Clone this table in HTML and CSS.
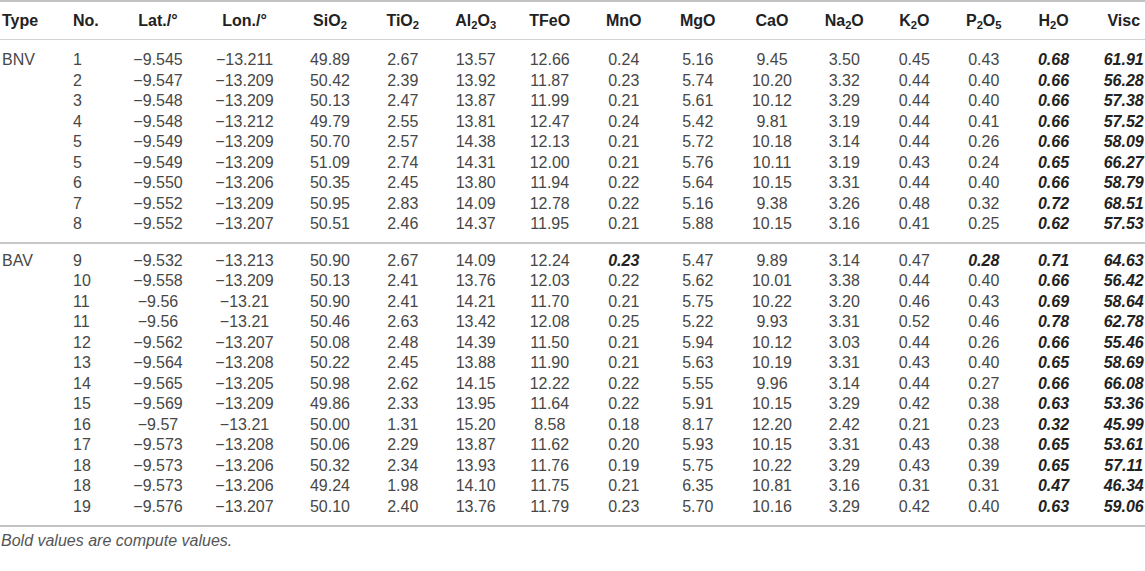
FILE: index.html
```html
<html>

<head>
    <link rel="stylesheet" href="styles.css">
</head>

<body>
<div class="wrap">
    <table class="data">
        <colgroup>
            <col style="width: 71px"><col style="width: 43.5px"><col style="width: 87px"><col style="width: 86px">
            <col style="width: 79px"><col style="width: 72.5px"><col style="width: 73.5px"><col style="width: 74.5px">
            <col style="width: 73.5px"><col style="width: 74.5px"><col style="width: 74px"><col style="width: 70.5px">
            <col style="width: 69.5px"><col style="width: 69.5px"><col style="width: 70px"><col style="width: 56.5px">
        </colgroup>
        <thead>
        <tr>
            <th>Type</th><th>No.</th><th>Lat./°</th><th>Lon./°</th><th>SiO<sub>2</sub></th><th>TiO<sub>2</sub></th>
            <th>Al<sub>2</sub>O<sub>3</sub></th><th>TFeO</th><th>MnO</th><th>MgO</th><th>CaO</th><th>Na<sub>2</sub>O</th>
            <th>K<sub>2</sub>O</th><th>P<sub>2</sub>O<sub>5</sub></th><th>H<sub>2</sub>O</th><th>Visc</th>
        </tr>
        </thead>
        <tbody>
        <tr><td>BNV</td><td>1</td><td>−9.545</td><td>−13.211</td><td>49.89</td><td>2.67</td><td>13.57</td><td>12.66</td><td>0.24</td><td>5.16</td><td>9.45</td><td>3.50</td><td>0.45</td><td>0.43</td><td>0.68</td><td>61.91</td></tr>
        <tr><td></td><td>2</td><td>−9.547</td><td>−13.209</td><td>50.42</td><td>2.39</td><td>13.92</td><td>11.87</td><td>0.23</td><td>5.74</td><td>10.20</td><td>3.32</td><td>0.44</td><td>0.40</td><td>0.66</td><td>56.28</td></tr>
        <tr><td></td><td>3</td><td>−9.548</td><td>−13.209</td><td>50.13</td><td>2.47</td><td>13.87</td><td>11.99</td><td>0.21</td><td>5.61</td><td>10.12</td><td>3.29</td><td>0.44</td><td>0.40</td><td>0.66</td><td>57.38</td></tr>
        <tr><td></td><td>4</td><td>−9.548</td><td>−13.212</td><td>49.79</td><td>2.55</td><td>13.81</td><td>12.47</td><td>0.24</td><td>5.42</td><td>9.81</td><td>3.19</td><td>0.44</td><td>0.41</td><td>0.66</td><td>57.52</td></tr>
        <tr><td></td><td>5</td><td>−9.549</td><td>−13.209</td><td>50.70</td><td>2.57</td><td>14.38</td><td>12.13</td><td>0.21</td><td>5.72</td><td>10.18</td><td>3.14</td><td>0.44</td><td>0.26</td><td>0.66</td><td>58.09</td></tr>
        <tr><td></td><td>5</td><td>−9.549</td><td>−13.209</td><td>51.09</td><td>2.74</td><td>14.31</td><td>12.00</td><td>0.21</td><td>5.76</td><td>10.11</td><td>3.19</td><td>0.43</td><td>0.24</td><td>0.65</td><td>66.27</td></tr>
        <tr><td></td><td>6</td><td>−9.550</td><td>−13.206</td><td>50.35</td><td>2.45</td><td>13.80</td><td>11.94</td><td>0.22</td><td>5.64</td><td>10.15</td><td>3.31</td><td>0.44</td><td>0.40</td><td>0.66</td><td>58.79</td></tr>
        <tr><td></td><td>7</td><td>−9.552</td><td>−13.209</td><td>50.95</td><td>2.83</td><td>14.09</td><td>12.78</td><td>0.22</td><td>5.16</td><td>9.38</td><td>3.26</td><td>0.48</td><td>0.32</td><td>0.72</td><td>68.51</td></tr>
        <tr><td></td><td>8</td><td>−9.552</td><td>−13.207</td><td>50.51</td><td>2.46</td><td>14.37</td><td>11.95</td><td>0.21</td><td>5.88</td><td>10.15</td><td>3.16</td><td>0.41</td><td>0.25</td><td>0.62</td><td>57.53</td></tr>
        </tbody>
        <tbody>
        <tr><td>BAV</td><td>9</td><td>−9.532</td><td>−13.213</td><td>50.90</td><td>2.67</td><td>14.09</td><td>12.24</td><td class="calc">0.23</td><td>5.47</td><td>9.89</td><td>3.14</td><td>0.47</td><td class="calc">0.28</td><td>0.71</td><td>64.63</td></tr>
        <tr><td></td><td>10</td><td>−9.558</td><td>−13.209</td><td>50.13</td><td>2.41</td><td>13.76</td><td>12.03</td><td>0.22</td><td>5.62</td><td>10.01</td><td>3.38</td><td>0.44</td><td>0.40</td><td>0.66</td><td>56.42</td></tr>
        <tr><td></td><td>11</td><td>−9.56</td><td>−13.21</td><td>50.90</td><td>2.41</td><td>14.21</td><td>11.70</td><td>0.21</td><td>5.75</td><td>10.22</td><td>3.20</td><td>0.46</td><td>0.43</td><td>0.69</td><td>58.64</td></tr>
        <tr><td></td><td>11</td><td>−9.56</td><td>−13.21</td><td>50.46</td><td>2.63</td><td>13.42</td><td>12.08</td><td>0.25</td><td>5.22</td><td>9.93</td><td>3.31</td><td>0.52</td><td>0.46</td><td>0.78</td><td>62.78</td></tr>
        <tr><td></td><td>12</td><td>−9.562</td><td>−13.207</td><td>50.08</td><td>2.48</td><td>14.39</td><td>11.50</td><td>0.21</td><td>5.94</td><td>10.12</td><td>3.03</td><td>0.44</td><td>0.26</td><td>0.66</td><td>55.46</td></tr>
        <tr><td></td><td>13</td><td>−9.564</td><td>−13.208</td><td>50.22</td><td>2.45</td><td>13.88</td><td>11.90</td><td>0.21</td><td>5.63</td><td>10.19</td><td>3.31</td><td>0.43</td><td>0.40</td><td>0.65</td><td>58.69</td></tr>
        <tr><td></td><td>14</td><td>−9.565</td><td>−13.205</td><td>50.98</td><td>2.62</td><td>14.15</td><td>12.22</td><td>0.22</td><td>5.55</td><td>9.96</td><td>3.14</td><td>0.44</td><td>0.27</td><td>0.66</td><td>66.08</td></tr>
        <tr><td></td><td>15</td><td>−9.569</td><td>−13.209</td><td>49.86</td><td>2.33</td><td>13.95</td><td>11.64</td><td>0.22</td><td>5.91</td><td>10.15</td><td>3.29</td><td>0.42</td><td>0.38</td><td>0.63</td><td>53.36</td></tr>
        <tr><td></td><td>16</td><td>−9.57</td><td>−13.21</td><td>50.00</td><td>1.31</td><td>15.20</td><td>8.58</td><td>0.18</td><td>8.17</td><td>12.20</td><td>2.42</td><td>0.21</td><td>0.23</td><td>0.32</td><td>45.99</td></tr>
        <tr><td></td><td>17</td><td>−9.573</td><td>−13.208</td><td>50.06</td><td>2.29</td><td>13.87</td><td>11.62</td><td>0.20</td><td>5.93</td><td>10.15</td><td>3.31</td><td>0.43</td><td>0.38</td><td>0.65</td><td>53.61</td></tr>
        <tr><td></td><td>18</td><td>−9.573</td><td>−13.206</td><td>50.32</td><td>2.34</td><td>13.93</td><td>11.76</td><td>0.19</td><td>5.75</td><td>10.22</td><td>3.29</td><td>0.43</td><td>0.39</td><td>0.65</td><td>57.11</td></tr>
        <tr><td></td><td>18</td><td>−9.573</td><td>−13.206</td><td>49.24</td><td>1.98</td><td>14.10</td><td>11.75</td><td>0.21</td><td>6.35</td><td>10.81</td><td>3.16</td><td>0.31</td><td>0.31</td><td>0.47</td><td>46.34</td></tr>
        <tr><td></td><td>19</td><td>−9.576</td><td>−13.207</td><td>50.10</td><td>2.40</td><td>13.76</td><td>11.79</td><td>0.23</td><td>5.70</td><td>10.16</td><td>3.29</td><td>0.42</td><td>0.40</td><td>0.63</td><td>59.06</td></tr>
        </tbody>
    </table>
    <p class="note">Bold values are compute values.</p>
</div>
</body>

</html>
```

FILE: styles.css
```css
body {
    margin: 0;
    overflow: hidden;
    background: white;
    font-family: "Liberation Sans", Arial, sans-serif;
    font-size: 16px;
    color: #474747;
}

.wrap {
    width: 1145px;
}

.data {
    width: 1145px;
    table-layout: fixed;
    border-collapse: collapse;
}

.data th,
.data td {
    padding: 0;
    text-align: center;
    white-space: nowrap;
    line-height: 20.5px;
}

.data th:nth-child(1),
.data td:nth-child(1),
.data th:nth-child(2),
.data td:nth-child(2) {
    text-align: left;
    padding-left: 2px;
}

.data th:nth-child(5),
.data td:nth-child(5) {
    padding-left: 6px;
}

.data th:nth-child(16),
.data td:nth-child(16) {
    padding-left: 14px;
}

.data thead tr {
    border-top: 2px solid #c2c2c2;
    border-bottom: 1px solid #d2d2d2;
}

.data th {
    padding-top: 9px;
    padding-bottom: 8px;
    line-height: 20px;
    font-weight: bold;
    color: #222;
}

.data sub {
    font-size: 0.7em;
    vertical-align: -0.28em;
    line-height: 0;
}

.data tbody + tbody {
    border-top: 2px solid #c8c8c8;
}

.data tbody {
    border-bottom: 2px solid #c2c2c2;
}

.data tbody:first-of-type {
    border-bottom: none;
}

.data tbody tr:first-child td {
    padding-top: 7px;
}

.data tbody:first-of-type tr:first-child td {
    padding-top: 10px;
}

.data tbody tr:last-child td {
    padding-bottom: 7px;
}

.data tbody:last-of-type tr:last-child td {
    padding-bottom: 8px;
}

.data td:nth-child(15),
.data td:nth-child(16),
.data td.calc {
    font-weight: bold;
    font-style: italic;
    color: #222;
}

.note {
    margin: 0;
    padding: 5px 0 0 1px;
    line-height: 18px;
    font-style: italic;
    color: #555;
}
```
